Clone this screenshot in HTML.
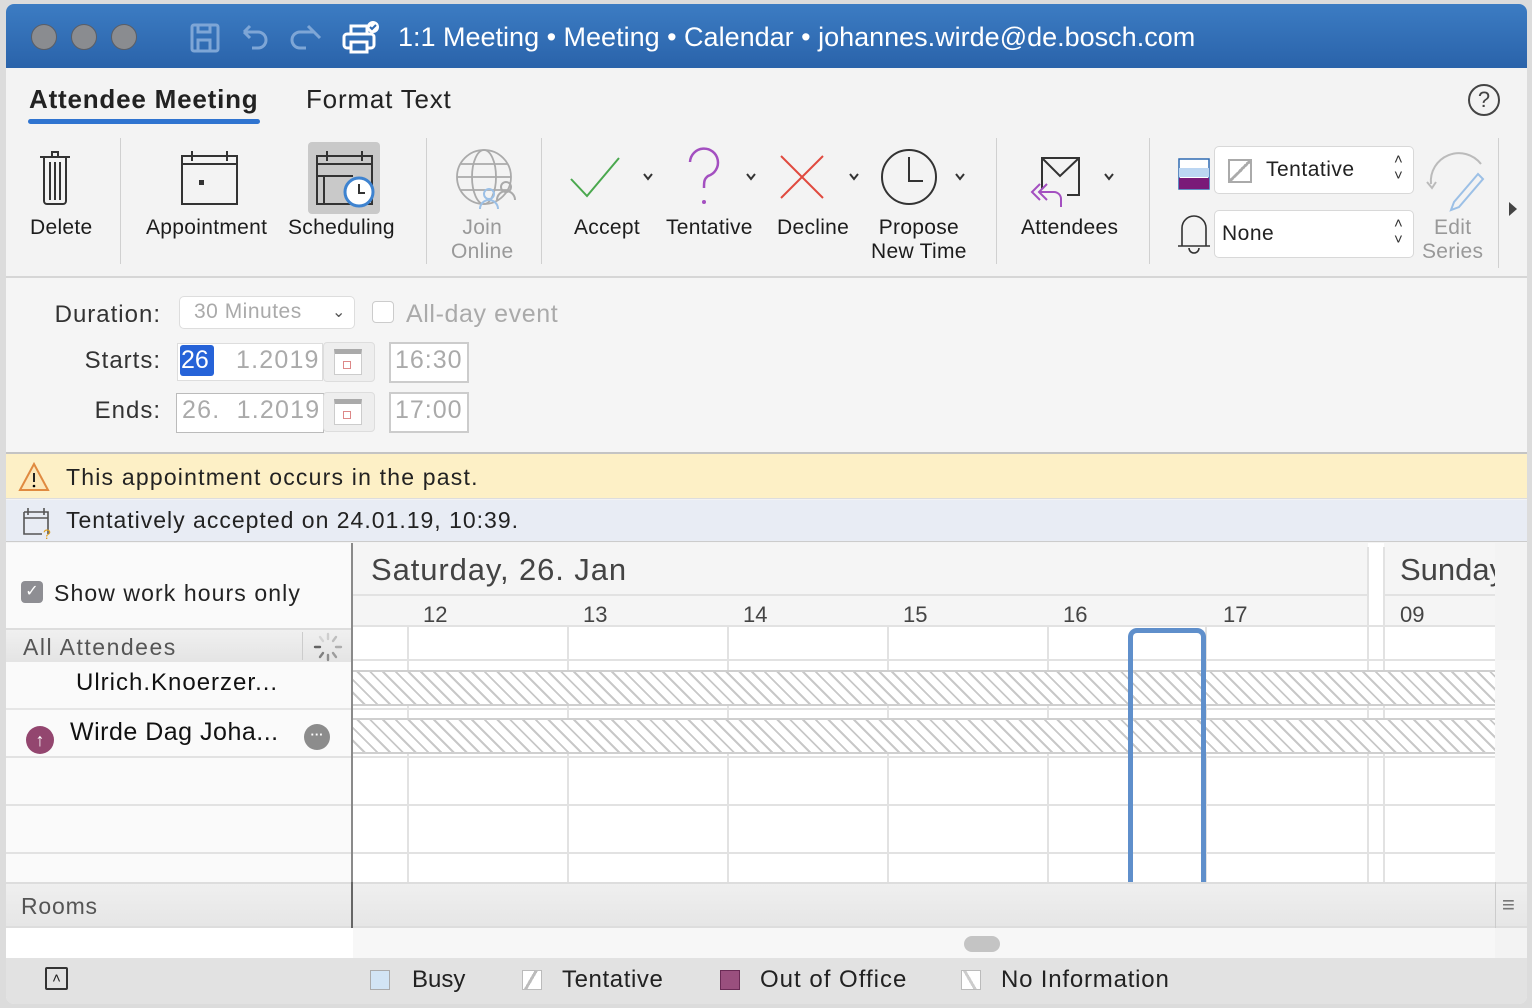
<!DOCTYPE html>
<html><head><meta charset="utf-8"><style>
*{margin:0;padding:0;box-sizing:border-box}
body{width:1532px;height:1008px;background:#dcdcdc;font-family:"Liberation Sans",sans-serif;position:relative;overflow:hidden;color:#222}
.a{position:absolute}
.win{position:absolute;left:6px;top:4px;width:1521px;height:1000px;background:#f3f3f3;border-radius:8px;overflow:hidden}
.t{position:absolute;white-space:nowrap}
.lbl{font-size:21px;letter-spacing:.3px;color:#1c1c1c;text-align:center}
.sep{position:absolute;top:134px;width:1px;height:126px;background:#d0d0d0}
.hatch{background:repeating-linear-gradient(45deg,#fff 0 7px,#c8c8c8 7px 9px);border-top:2px solid #cfcfcf;border-bottom:2px solid #cfcfcf}
.vl{position:absolute;width:2px;background:#e2e2e2}
.hl{position:absolute;height:2px;background:#e2e2e2}
.fl{position:absolute;left:0;width:155px;text-align:right;font-size:24px;color:#333;letter-spacing:1px}
</style></head><body>
<div class="win">
 <div class="a" style="left:0;top:0;width:1521px;height:64px;background:linear-gradient(#3c7cc3,#2a63aa)"></div>
 <div class="a" style="left:25px;top:20px;width:26px;height:26px;border-radius:50%;background:#8a8c90;border:1px solid #5a5e66"></div>
 <div class="a" style="left:65px;top:20px;width:26px;height:26px;border-radius:50%;background:#8a8c90;border:1px solid #5a5e66"></div>
 <div class="a" style="left:105px;top:20px;width:26px;height:26px;border-radius:50%;background:#8a8c90;border:1px solid #5a5e66"></div>
 <svg class="a" style="left:180px;top:16px" width="200" height="36" viewBox="0 0 200 36">
  <g fill="none" stroke="#7ea6d6" stroke-width="3">
   <rect x="6" y="5" width="26" height="26" rx="2"/><rect x="12" y="5" width="12" height="7"/><rect x="12" y="20" width="12" height="11"/>
   <path d="M58 12h14a8 8 0 0 1 0 16h-6M58 12l6-6M58 12l6 6"/>
   <path d="M138 12h-14a8 8 0 0 0 0 16h6M138 12l-6-6M138 12l6 6" transform="translate(-10 0)"/>
  </g>
  <g fill="none" stroke="#fff" stroke-width="3">
   <rect x="158" y="14" width="30" height="14" rx="3"/><rect x="165" y="6" width="16" height="8"/><rect x="165" y="22" width="16" height="10" fill="#2f6bb2"/>
  </g>
  <circle cx="187" cy="7" r="6" fill="#fff"/><path d="M184 7l2 2 4-4" stroke="#2f6bb2" stroke-width="2" fill="none"/>
 </svg>
 <div class="t" style="left:392px;top:18px;font-size:27px;color:#fff">1:1 Meeting • Meeting • Calendar • johannes.wirde@de.bosch.com</div>

 <div class="t" style="left:23px;top:80px;font-size:26px;font-weight:bold;color:#222;letter-spacing:.8px">Attendee Meeting</div>
 <div class="a" style="left:22px;top:115px;width:232px;height:5px;border-radius:3px;background:#2f74d0"></div>
 <div class="t" style="left:300px;top:80px;font-size:26px;color:#222;letter-spacing:.8px">Format Text</div>
 <div class="a" style="left:1462px;top:80px;width:32px;height:32px;border-radius:50%;border:2px solid #444;font-size:22px;text-align:center;line-height:28px;color:#444">?</div>

 <svg class="a" style="left:0;top:130px" width="1521" height="140" viewBox="0 130 1521 140">
  <g fill="none" stroke="#333" stroke-width="2">
   <path d="M34 153h30M46 153v-5h6v5M38 153v44a3 3 0 0 0 3 3h16a3 3 0 0 0 3-3v-44M44 158v38M49 158v38M54 158v38"/>
   <rect x="176" y="152" width="55" height="48"/><path d="M176 160h55M186 147v10M221 147v10"/><rect x="194" y="177" width="3" height="3" fill="#333"/>
  </g>
  <rect x="302" y="138" width="72" height="72" rx="4" fill="#c9c9c9"/>
  <g fill="none" stroke="#333" stroke-width="2"><rect x="311" y="152" width="55" height="48"/><path d="M311 160h55M321 147v10M356 147v10M311 172h36M318 172v28"/></g>
  <circle cx="353" cy="188" r="14" fill="#fff" stroke="#3e83d0" stroke-width="3"/><path d="M353 180v9h6" stroke="#333" stroke-width="2" fill="none"/>
  <g fill="none" stroke="#aaa" stroke-width="1.8"><circle cx="478" cy="173" r="27"/><ellipse cx="478" cy="173" rx="12" ry="27"/><path d="M451 173h54M455 160h46M455 186h46"/></g>
  <g fill="none" stroke="#9cc0e6" stroke-width="2"><circle cx="483" cy="190" r="5"/><path d="M474 205a9 9 0 0 1 18 0"/></g>
  <g fill="none" stroke="#aaa" stroke-width="2"><circle cx="500" cy="183" r="5"/><path d="M491 196a9 9 0 0 1 18 0"/></g>
  <path d="M565 175l16 17 32-38" fill="none" stroke="#4aa84e" stroke-width="2"/>
  <path d="M684 158a14 14 0 1 1 18 14c-4 3-4 6-4 12" fill="none" stroke="#a34fc0" stroke-width="2.5"/><circle cx="698" cy="198" r="2" fill="#a34fc0"/>
  <path d="M775 152l42 42M817 152l-42 42" stroke="#e04a3f" stroke-width="2"/>
  <circle cx="903" cy="173" r="27" fill="none" stroke="#333" stroke-width="2"/><path d="M903 153v24h14" fill="none" stroke="#333" stroke-width="2"/>
  <g fill="none" stroke="#333" stroke-width="2"><path d="M1036 185v-31h37v37h-12M1036 154l18 18 19-18"/></g>
  <g fill="none" stroke="#a34fc0" stroke-width="2"><path d="M1034 180l-8 8 8 8M1041 180l-8 8 8 8M1034 188h14a7 7 0 0 1 7 7v8"/></g>
  <g fill="none" stroke="#333" stroke-width="2"><path d="M638 170l4 5 4-5M741 170l4 5 4-5M844 170l4 5 4-5M950 170l4 5 4-5M1099 170l4 5 4-5"/></g>
  <rect x="1173" y="155" width="30" height="30" fill="#fff" stroke="#2f6bb2" stroke-width="1.5"/>
  <rect x="1173" y="164" width="30" height="9" fill="#bcd6f2"/><rect x="1173" y="174" width="30" height="11" fill="#7a1a78"/>
  <path d="M1176 224a12 12 0 0 1 24 0v18h4H1172h4z M1183 244a5 5 0 0 0 10 0" fill="none" stroke="#333" stroke-width="1.6"/>
  <path d="M1425 180a28 28 0 0 1 50-20" fill="none" stroke="#bbb" stroke-width="2"/><path d="M1421 178l5 6 4-6" fill="none" stroke="#bbb" stroke-width="2"/>
  <path d="M1472 170l-24 28-3 8 8-3 24-28z" fill="none" stroke="#9cc0e6" stroke-width="2"/>
  <path d="M1503 198l8 7-8 7z" fill="#444"/>
 </svg>
 <div class="sep" style="left:114px"></div><div class="sep" style="left:420px"></div><div class="sep" style="left:535px"></div><div class="sep" style="left:990px"></div><div class="sep" style="left:1143px"></div>
 <div class="a" style="left:1492px;top:134px;width:1px;height:130px;background:#d0d0d0"></div>
 <div class="t lbl" style="left:24px;top:212px">Delete</div>
 <div class="t lbl" style="left:140px;top:212px">Appointment</div>
 <div class="t lbl" style="left:282px;top:212px">Scheduling</div>
 <div class="t lbl" style="left:445px;top:212px;color:#999;line-height:24px">Join<br>Online</div>
 <div class="t lbl" style="left:568px;top:212px">Accept</div>
 <div class="t lbl" style="left:660px;top:212px">Tentative</div>
 <div class="t lbl" style="left:771px;top:212px">Decline</div>
 <div class="t lbl" style="left:865px;top:212px;line-height:24px">Propose<br>New Time</div>
 <div class="t lbl" style="left:1015px;top:212px">Attendees</div>
 <div class="t lbl" style="left:1416px;top:212px;color:#999;line-height:24px">Edit<br>Series</div>
 <div class="a" style="left:1208px;top:142px;width:200px;height:48px;background:#fff;border:1px solid #d8d8d8;border-radius:5px"></div>
 <div class="a" style="left:1222px;top:155px;width:24px;height:24px;border:2px solid #aaa;background:linear-gradient(135deg,transparent 45%,#aaa 45%,#aaa 55%,transparent 55%)"></div>
 <div class="t" style="left:1260px;top:154px;font-size:21px;letter-spacing:.5px">Tentative</div>
 <div class="t" style="left:1388px;top:148px;font-size:15px;line-height:16px;color:#333">˄<br>˅</div>
 <div class="a" style="left:1208px;top:206px;width:200px;height:48px;background:#fff;border:1px solid #d8d8d8;border-radius:5px"></div>
 <div class="t" style="left:1216px;top:218px;font-size:21px;letter-spacing:.5px">None</div>
 <div class="t" style="left:1388px;top:212px;font-size:15px;line-height:16px;color:#333">˄<br>˅</div>
 <div class="a" style="left:0;top:272px;width:1521px;height:2px;background:#d6d6d6"></div>

 <div class="a" style="left:0;top:274px;width:1521px;height:176px;background:#f5f5f5"></div>
 <div class="fl" style="top:297px">Duration:</div>
 <div class="fl" style="top:343px">Starts:</div>
 <div class="fl" style="top:393px">Ends:</div>
 <div class="a" style="left:173px;top:292px;width:176px;height:33px;background:#fff;border:1px solid #ddd;border-radius:5px"></div>
 <div class="t" style="left:188px;top:296px;font-size:21px;color:#aaa;letter-spacing:.5px">30 Minutes</div>
 <div class="t" style="left:326px;top:298px;font-size:16px;color:#555">⌄</div>
 <div class="a" style="left:366px;top:297px;width:22px;height:22px;background:#fff;border:1px solid #ccc;border-radius:4px"></div>
 <div class="t" style="left:400px;top:296px;font-size:25px;color:#aaa;letter-spacing:.6px">All-day event</div>
 <div class="a" style="left:171px;top:339px;width:146px;height:38px;background:#fff;border:1px solid #ddd"></div>
 <div class="a" style="left:174px;top:341px;width:34px;height:31px;background:#2663d8;border-radius:3px"></div>
 <div class="t" style="left:175px;top:342px;font-size:25px;color:#fff">26</div>
 <div class="t" style="left:230px;top:342px;font-size:25px;color:#aaa;letter-spacing:1.2px">1.2019</div>
 <div class="a" style="left:170px;top:389px;width:148px;height:40px;background:#fff;border:1px solid #bbb"></div>
 <div class="t" style="left:176px;top:392px;font-size:25px;color:#aaa;letter-spacing:1.2px">26.&nbsp;&nbsp;1.2019</div>
 <div class="a" style="left:317px;top:338px;width:52px;height:40px;background:#eee;border:1px solid #ddd;border-radius:4px"></div>
 <div class="a" style="left:317px;top:388px;width:52px;height:40px;background:#eee;border:1px solid #ddd;border-radius:4px"></div>
 <div class="a" style="left:328px;top:345px;width:28px;height:26px;background:#fff;border:1px solid #ccc;border-top:5px solid #aaa"><div class="a" style="left:8px;top:7px;width:8px;height:8px;border:1px solid #d88"></div></div>
 <div class="a" style="left:328px;top:395px;width:28px;height:26px;background:#fff;border:1px solid #ccc;border-top:5px solid #aaa"><div class="a" style="left:8px;top:7px;width:8px;height:8px;border:1px solid #d88"></div></div>
 <div class="a" style="left:383px;top:338px;width:80px;height:41px;background:#fff;border:2px solid #ccc"></div>
 <div class="t" style="left:389px;top:342px;font-size:25px;color:#aaa;letter-spacing:1px">16:30</div>
 <div class="a" style="left:383px;top:388px;width:80px;height:41px;background:#fff;border:2px solid #ccc"></div>
 <div class="t" style="left:389px;top:392px;font-size:25px;color:#aaa;letter-spacing:1px">17:00</div>

 <div class="a" style="left:0;top:448px;width:1521px;height:2px;background:#c4c4c4"></div>
 <div class="a" style="left:0;top:450px;width:1521px;height:45px;background:#fdf0c6;border-bottom:1px solid #ddd"></div>
 <svg class="a" style="left:12px;top:458px" width="32" height="30"><path d="M16 2L30 28H2z" fill="#fce7b8" stroke="#e08a40" stroke-width="2"/><path d="M16 11v9" stroke="#222" stroke-width="2"/><circle cx="16" cy="24" r="1.3"/></svg>
 <div class="t" style="left:60px;top:460px;font-size:23px;letter-spacing:1.2px">This appointment occurs in the past.</div>
 <div class="a" style="left:0;top:496px;width:1521px;height:42px;background:#e8ecf4;border-bottom:1px solid #ccc"></div>
 <svg class="a" style="left:12px;top:501px" width="36" height="36"><path d="M6 7h24v22M6 7v22h18M6 13h24M10 3v7M26 3v7" fill="none" stroke="#555" stroke-width="1.6"/><text x="25" y="34" font-size="14" fill="#e0a020" font-family="Liberation Sans">?</text></svg>
 <div class="t" style="left:60px;top:503px;font-size:23px;letter-spacing:1px">Tentatively accepted on 24.01.19, 10:39.</div>

 <div class="a" style="left:0;top:539px;width:346px;height:385px;background:#fafafa"></div>
 <div class="a" style="left:15px;top:577px;width:22px;height:22px;background:#8e8e93;border-radius:4px;color:#fff;font-size:16px;text-align:center;line-height:22px">✓</div>
 <div class="t" style="left:48px;top:576px;font-size:23px;letter-spacing:1.1px">Show work hours only</div>
 <div class="a" style="left:0;top:624px;width:346px;height:34px;background:linear-gradient(#f0f0f0,#e4e4e4);border-top:2px solid #ddd"></div>
 <div class="t" style="left:17px;top:630px;font-size:23px;color:#555;letter-spacing:1.5px">All Attendees</div>
 <div class="a" style="left:296px;top:628px;width:1px;height:28px;background:#ccc"></div>
 <svg class="a" style="left:306px;top:627px" width="32" height="32"><g stroke="#555" stroke-width="2.4" stroke-linecap="round"><path d="M16 3v5" opacity=".2"/><path d="M24 6l-3 4" opacity=".3"/><path d="M29 16h-5" opacity=".4"/><path d="M24 26l-3-4" opacity=".5"/><path d="M16 29v-5" opacity=".6"/><path d="M8 26l3-4" opacity=".7"/><path d="M3 16h5" opacity=".9"/><path d="M8 6l3 4" opacity=".15"/></g></svg>
 <div class="t" style="left:70px;top:665px;font-size:24px;color:#111;letter-spacing:1px">Ulrich.Knoerzer...</div>
 <div class="hl" style="left:0;top:704px;width:346px;background:#e6e6e6"></div>
 <div class="a" style="left:20px;top:722px;width:28px;height:28px;border-radius:50%;background:#93466f;color:#fff;text-align:center;font-size:18px;line-height:28px;font-weight:bold">↑</div>
 <div class="t" style="left:64px;top:714px;font-size:25px;color:#111;letter-spacing:.5px">Wirde Dag Joha...</div>
 <div class="a" style="left:298px;top:720px;width:26px;height:26px;border-radius:50%;background:#8c8c8c;color:#fff;text-align:center;font-size:13px;line-height:22px;font-weight:bold">···</div>
 <div class="hl" style="left:0;top:752px;width:346px"></div>
 <div class="hl" style="left:0;top:800px;width:346px"></div>
 <div class="hl" style="left:0;top:848px;width:346px"></div>
 <div class="a" style="left:345px;top:539px;width:2px;height:385px;background:#8a8a8a"></div>

 <div class="a" style="left:347px;top:539px;width:1142px;height:339px;background:#fff"></div>
 <div class="a" style="left:347px;top:539px;width:1015px;height:84px;background:#f5f5f5"></div>
 <div class="a" style="left:1378px;top:539px;width:111px;height:84px;background:#f5f5f5"></div>
 <div class="hl" style="left:347px;top:590px;width:1015px"></div><div class="hl" style="left:1378px;top:590px;width:111px"></div>
 <div class="hl" style="left:347px;top:621px;width:1142px"></div>
 <div class="t" style="left:365px;top:548px;font-size:31px;color:#444;letter-spacing:.9px">Saturday, 26. Jan</div>
 <div class="t" style="left:1394px;top:548px;font-size:31px;color:#444;width:95px;overflow:hidden">Sunday</div>
 <div class="t" style="left:417px;top:598px;font-size:22px;color:#444">12</div>
 <div class="t" style="left:577px;top:598px;font-size:22px;color:#444">13</div>
 <div class="t" style="left:737px;top:598px;font-size:22px;color:#444">14</div>
 <div class="t" style="left:897px;top:598px;font-size:22px;color:#444">15</div>
 <div class="t" style="left:1057px;top:598px;font-size:22px;color:#444">16</div>
 <div class="t" style="left:1217px;top:598px;font-size:22px;color:#444">17</div>
 <div class="t" style="left:1394px;top:598px;font-size:22px;color:#444">09</div>
 <div class="vl" style="left:401px;top:623px;height:255px"></div>
 <div class="vl" style="left:561px;top:623px;height:255px"></div>
 <div class="vl" style="left:721px;top:623px;height:255px"></div>
 <div class="vl" style="left:881px;top:623px;height:255px"></div>
 <div class="vl" style="left:1041px;top:623px;height:255px"></div>
 <div class="vl" style="left:1199px;top:623px;height:255px"></div>
 <div class="vl" style="left:1361px;top:543px;height:335px"></div>
 <div class="vl" style="left:1377px;top:543px;height:335px"></div>
 <div class="hl" style="left:347px;top:655px;width:1142px"></div>
 <div class="hl" style="left:347px;top:704px;width:1142px"></div>
 <div class="hl" style="left:347px;top:752px;width:1142px"></div>
 <div class="hl" style="left:347px;top:800px;width:1142px"></div>
 <div class="hl" style="left:347px;top:848px;width:1142px"></div>
 <div class="a hatch" style="left:347px;top:666px;width:1142px;height:36px"></div>
 <div class="a hatch" style="left:347px;top:714px;width:1142px;height:36px"></div>
 <div class="a" style="left:1122px;top:624px;width:78px;height:260px;border:5px solid #5f8fcb;border-bottom:none;border-radius:9px 9px 0 0"></div>
 <div class="a" style="left:1489px;top:656px;width:32px;height:222px;background:#f5f5f5"></div>

 <div class="a" style="left:0;top:878px;width:1521px;height:46px;background:linear-gradient(#efefef,#e6e6e6);border-top:2px solid #ddd;border-bottom:2px solid #ddd"></div>
 <div class="a" style="left:345px;top:878px;width:2px;height:46px;background:#666"></div>
 <div class="t" style="left:15px;top:889px;font-size:23px;color:#555;letter-spacing:.8px">Rooms</div>
 <div class="a" style="left:1489px;top:878px;width:1px;height:46px;background:#ccc"></div>
 <div class="t" style="left:1496px;top:888px;font-size:22px;color:#777">≡</div>
 <div class="a" style="left:0;top:924px;width:347px;height:30px;background:#fff"></div>
 <div class="a" style="left:347px;top:924px;width:1142px;height:30px;background:#f7f7f7"></div>
 <div class="a" style="left:958px;top:932px;width:36px;height:16px;border-radius:8px;background:#c4c4c4"></div>

 <div class="a" style="left:0;top:954px;width:1521px;height:46px;background:#e2e2e2"></div>
 <div class="a" style="left:39px;top:963px;width:23px;height:23px;border:2px solid #333;border-radius:2px;font-size:15px;text-align:center;line-height:19px">˄</div>
 <div class="a" style="left:364px;top:966px;width:20px;height:20px;background:#d2e4f4;border:1px solid #aaa"></div>
 <div class="t" style="left:406px;top:962px;font-size:24px">Busy</div>
 <div class="a" style="left:516px;top:966px;width:20px;height:20px;background:linear-gradient(120deg,#fff 40%,#bbb 40%,#bbb 52%,#fff 52%);border:1px solid #bbb"></div>
 <div class="t" style="left:556px;top:962px;font-size:24px;letter-spacing:.6px">Tentative</div>
 <div class="a" style="left:714px;top:966px;width:20px;height:20px;background:#9a4f7e;border:1px solid #6a2a55"></div>
 <div class="t" style="left:754px;top:962px;font-size:24px;letter-spacing:1px">Out of Office</div>
 <div class="a" style="left:955px;top:966px;width:20px;height:20px;background:linear-gradient(60deg,#fff 40%,#ccc 40%,#ccc 52%,#fff 52%);border:1px solid #bbb"></div>
 <div class="t" style="left:995px;top:962px;font-size:24px;letter-spacing:.8px">No Information</div>
</div>
</body></html>
